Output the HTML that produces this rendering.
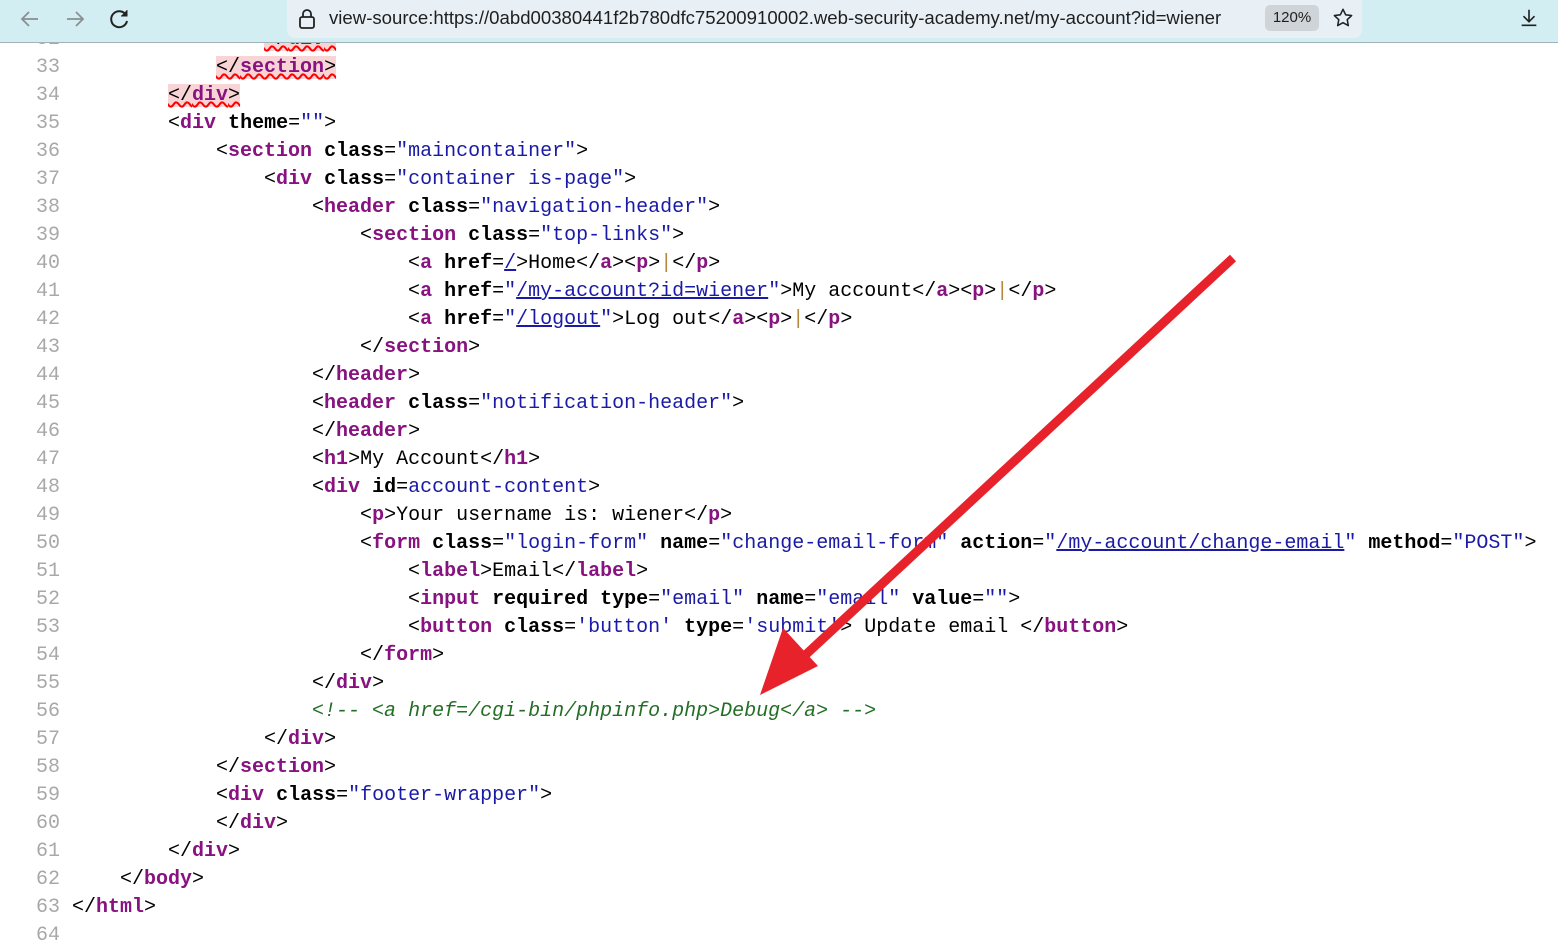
<!DOCTYPE html>
<html><head><meta charset="utf-8"><style>
body{margin:0;width:1558px;height:945px;overflow:hidden;background:#fff;position:relative;font-family:"Liberation Sans",sans-serif}
#bar{position:absolute;left:0;top:0;width:1558px;height:42px;background:#d3eef2;border-bottom:1px solid #9fb3b8;z-index:5}
#url{position:absolute;left:287px;top:0;width:1075px;height:38px;background:#e8f0f6;border-radius:0 0 8px 8px}
#url span.t{position:absolute;left:42px;top:7px;font-size:18.6px;color:#1f1f1f;white-space:nowrap}
#zoom{position:absolute;left:978px;top:5px;width:54px;height:26px;background:#cfd4d9;border-radius:5px;font-size:15px;line-height:26px;text-align:center;color:#1f1f1f}
#code{position:absolute;left:0;top:26px;font-family:"Liberation Mono",monospace;font-size:20px;}
.l{height:28px;line-height:28px;white-space:pre;position:relative}
.n{position:absolute;left:0;width:60px;text-align:right;color:#a8a8a8}
.c{position:absolute;left:72px;color:#000}
.g{color:#881280;font-weight:bold}
.a{font-weight:bold}
.v{color:#1a1aa6}
.k{color:#1a1aa6;text-decoration:underline}
.m{color:#236e25;font-style:italic}
.e{background:#f8d4d6;text-decoration:underline wavy red}
.p{color:#b58a3c}
</style></head><body>
<div id="code">
<div class="l"><span class="n">32</span><span class="c">                <span class="e">&lt;/<span class="g">div</span>&gt;</span></span></div>
<div class="l"><span class="n">33</span><span class="c">            <span class="e">&lt;/<span class="g">section</span>&gt;</span></span></div>
<div class="l"><span class="n">34</span><span class="c">        <span class="e">&lt;/<span class="g">div</span>&gt;</span></span></div>
<div class="l"><span class="n">35</span><span class="c">        &lt;<span class="g">div</span> <span class="a">theme</span>=<span class="v">""</span>&gt;</span></div>
<div class="l"><span class="n">36</span><span class="c">            &lt;<span class="g">section</span> <span class="a">class</span>=<span class="v">"maincontainer"</span>&gt;</span></div>
<div class="l"><span class="n">37</span><span class="c">                &lt;<span class="g">div</span> <span class="a">class</span>=<span class="v">"container is-page"</span>&gt;</span></div>
<div class="l"><span class="n">38</span><span class="c">                    &lt;<span class="g">header</span> <span class="a">class</span>=<span class="v">"navigation-header"</span>&gt;</span></div>
<div class="l"><span class="n">39</span><span class="c">                        &lt;<span class="g">section</span> <span class="a">class</span>=<span class="v">"top-links"</span>&gt;</span></div>
<div class="l"><span class="n">40</span><span class="c">                            &lt;<span class="g">a</span> <span class="a">href</span>=<span class="k">/</span>&gt;Home&lt;/<span class="g">a</span>&gt;&lt;<span class="g">p</span>&gt;<span class="p">|</span>&lt;/<span class="g">p</span>&gt;</span></div>
<div class="l"><span class="n">41</span><span class="c">                            &lt;<span class="g">a</span> <span class="a">href</span>=<span class="v">"</span><span class="k">/my-account?id=wiener</span><span class="v">"</span>&gt;My account&lt;/<span class="g">a</span>&gt;&lt;<span class="g">p</span>&gt;<span class="p">|</span>&lt;/<span class="g">p</span>&gt;</span></div>
<div class="l"><span class="n">42</span><span class="c">                            &lt;<span class="g">a</span> <span class="a">href</span>=<span class="v">"</span><span class="k">/logout</span><span class="v">"</span>&gt;Log out&lt;/<span class="g">a</span>&gt;&lt;<span class="g">p</span>&gt;<span class="p">|</span>&lt;/<span class="g">p</span>&gt;</span></div>
<div class="l"><span class="n">43</span><span class="c">                        &lt;/<span class="g">section</span>&gt;</span></div>
<div class="l"><span class="n">44</span><span class="c">                    &lt;/<span class="g">header</span>&gt;</span></div>
<div class="l"><span class="n">45</span><span class="c">                    &lt;<span class="g">header</span> <span class="a">class</span>=<span class="v">"notification-header"</span>&gt;</span></div>
<div class="l"><span class="n">46</span><span class="c">                    &lt;/<span class="g">header</span>&gt;</span></div>
<div class="l"><span class="n">47</span><span class="c">                    &lt;<span class="g">h1</span>&gt;My Account&lt;/<span class="g">h1</span>&gt;</span></div>
<div class="l"><span class="n">48</span><span class="c">                    &lt;<span class="g">div</span> <span class="a">id</span>=<span class="v">account-content</span>&gt;</span></div>
<div class="l"><span class="n">49</span><span class="c">                        &lt;<span class="g">p</span>&gt;Your username is: wiener&lt;/<span class="g">p</span>&gt;</span></div>
<div class="l"><span class="n">50</span><span class="c">                        &lt;<span class="g">form</span> <span class="a">class</span>=<span class="v">"login-form"</span> <span class="a">name</span>=<span class="v">"change-email-form"</span> <span class="a">action</span>=<span class="v">"</span><span class="k">/my-account/change-email</span><span class="v">"</span> <span class="a">method</span>=<span class="v">"POST"</span>&gt;</span></div>
<div class="l"><span class="n">51</span><span class="c">                            &lt;<span class="g">label</span>&gt;Email&lt;/<span class="g">label</span>&gt;</span></div>
<div class="l"><span class="n">52</span><span class="c">                            &lt;<span class="g">input</span> <span class="a">required</span> <span class="a">type</span>=<span class="v">"email"</span> <span class="a">name</span>=<span class="v">"email"</span> <span class="a">value</span>=<span class="v">""</span>&gt;</span></div>
<div class="l"><span class="n">53</span><span class="c">                            &lt;<span class="g">button</span> <span class="a">class</span>=<span class="v">'button'</span> <span class="a">type</span>=<span class="v">'submit'</span>&gt; Update email &lt;/<span class="g">button</span>&gt;</span></div>
<div class="l"><span class="n">54</span><span class="c">                        &lt;/<span class="g">form</span>&gt;</span></div>
<div class="l"><span class="n">55</span><span class="c">                    &lt;/<span class="g">div</span>&gt;</span></div>
<div class="l"><span class="n">56</span><span class="c">                    <span class="m">&lt;!-- &lt;a href=/cgi-bin/phpinfo.php&gt;Debug&lt;/a&gt; --&gt;</span></span></div>
<div class="l"><span class="n">57</span><span class="c">                &lt;/<span class="g">div</span>&gt;</span></div>
<div class="l"><span class="n">58</span><span class="c">            &lt;/<span class="g">section</span>&gt;</span></div>
<div class="l"><span class="n">59</span><span class="c">            &lt;<span class="g">div</span> <span class="a">class</span>=<span class="v">"footer-wrapper"</span>&gt;</span></div>
<div class="l"><span class="n">60</span><span class="c">            &lt;/<span class="g">div</span>&gt;</span></div>
<div class="l"><span class="n">61</span><span class="c">        &lt;/<span class="g">div</span>&gt;</span></div>
<div class="l"><span class="n">62</span><span class="c">    &lt;/<span class="g">body</span>&gt;</span></div>
<div class="l"><span class="n">63</span><span class="c">&lt;/<span class="g">html</span>&gt;</span></div>
<div class="l"><span class="n">64</span><span class="c"></span></div>
</div>
<div id="bar">
<svg style="position:absolute;left:18px;top:9px" width="24" height="20" viewBox="0 0 24 20"><path d="M20 10H4M11 3L4 10l7 7" stroke="#8a8f93" stroke-width="1.8" fill="none"/></svg>
<svg style="position:absolute;left:63px;top:9px" width="24" height="20" viewBox="0 0 24 20"><path d="M4 10h16M13 3l7 7-7 7" stroke="#8a8f93" stroke-width="1.8" fill="none"/></svg>
<svg style="position:absolute;left:108px;top:7px" width="24" height="24" viewBox="0 0 24 24"><path d="M18 8A8 8 0 1 0 19 14" stroke="#222" stroke-width="2" fill="none"/><path d="M19 3v6h-6" fill="#222" stroke="#222" stroke-width="1"/></svg>
<div id="url">
<svg style="position:absolute;left:10px;top:7px" width="20" height="24" viewBox="0 0 20 24"><rect x="3" y="10" width="14" height="11" rx="2" stroke="#222" stroke-width="1.8" fill="none"/><path d="M6 10V7a4 4 0 0 1 8 0v3" stroke="#222" stroke-width="1.8" fill="none"/></svg>
<span class="t">view-source:https://0abd00380441f2b780dfc75200910002.web-security-academy.net/my-account?id=wiener</span>
<div id="zoom">120%</div>
<svg style="position:absolute;left:1045px;top:7px" width="22" height="22" viewBox="0 0 24 24"><path d="M12 2.5l2.9 6 6.5.8-4.8 4.5 1.2 6.5L12 17.1 6.2 20.3l1.2-6.5L2.6 9.3l6.5-.8z" stroke="#222" stroke-width="1.7" fill="none" stroke-linejoin="round"/></svg>
</div>
<svg style="position:absolute;left:1518px;top:7px" width="22" height="22" viewBox="0 0 24 24"><path d="M12 3v12M6 10l6 6 6-6M4 20h16" stroke="#222" stroke-width="1.8" fill="none"/></svg>
</div>
<svg style="position:absolute;left:0;top:0;z-index:6" width="1558" height="945"><path d="M1233 258L800 660" stroke="#e8222a" stroke-width="9" fill="none"/><path d="M760 695L783 628L818 666Z" fill="#e8222a"/></svg>
</body></html>
